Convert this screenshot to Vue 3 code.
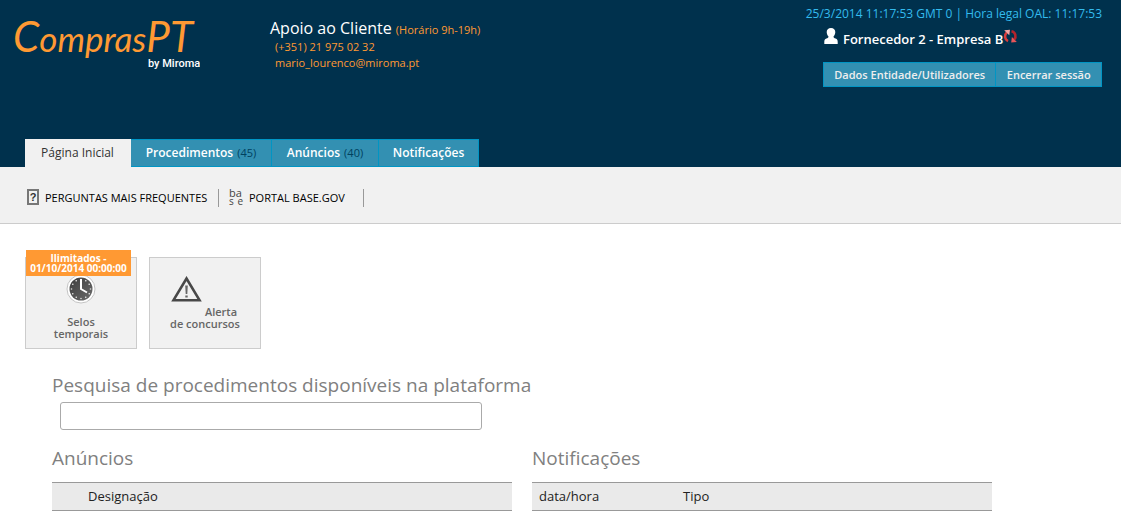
<script setup>
import { ref } from 'vue'

const query = ref('')
const tabs = [
  { label: 'Página Inicial', size: 'home', active: true },
  { label: 'Procedimentos', size: 'procedures', count: 45 },
  { label: 'Anúncios', size: 'notices', count: 40 },
  { label: 'Notificações', size: 'alerts' },
]
const ticks = [0, 30, 60, 90, 120, 150, 180, 210, 240, 270, 300, 330]
</script>

<template>
  <div class="page">
    <header class="header">
      <div class="top">
        <a class="brand" href="#" aria-label="ComprasPT by Miroma">
          <svg class="logo" viewBox="0 0 200 80" aria-hidden="true">
            <text class="wordmark" x="13" y="52"><tspan class="capital">C</tspan>ompras<tspan class="capital">PT</tspan></text>
            <text class="byline" x="148" y="67">by Miroma</text>
          </svg>
        </a>
        <div class="support">
          <p class="support-title">Apoio ao Cliente <span class="hours">(Horário 9h-19h)</span></p>
          <a class="contact" href="tel:+351219750232">(+351) 21 975 02 32</a>
          <a class="contact" href="mailto:mario_lourenco@miroma.pt">mario_lourenco@miroma.pt</a>
        </div>
        <div class="account">
          <p class="clock">25/3/2014 11:17:53 GMT 0 | Hora legal OAL: 11:17:53</p>
          <p class="user">
            <svg class="person" viewBox="0 0 14 17" aria-hidden="true">
              <path fill="#fff" d="M7 0C4.300 0 2.600 1.800 2.700 4.200C2.800 6 3.600 7.500 4.500 8.400C4.500 9.500 3.800 10 2.400 10.600C.8 11.300.3 12.300.3 14V16H13.700V14C13.700 12.300 13.200 11.300 11.600 10.600C10.200 10 9.500 9.500 9.500 8.400C10.400 7.500 11.200 6 11.300 4.200C11.400 1.800 9.700 0 7 0Z" />
            </svg>
            <span class="user-name">Fornecedor 2 - Empresa B</span>
            <button class="refresh" type="button" aria-label="Mudar de entidade">
              <svg viewBox="0 0 15 15" aria-hidden="true">
                <g fill="none" stroke-width="2.600">
                  <path stroke="#d83a3a" d="M5 12.200C1.600 10.500 1 6 3.800 3.400" />
                  <path stroke="#b3242c" d="M8.500 2.200C12.400 3 13.700 7.600 11.200 10.600" />
                </g>
                <path fill="#f3a3a3" d="M1.200 1.200L7 .8L6.300 6.200Z" />
                <path fill="#e8565a" d="M13.800 13L8.200 13.400L8.900 8Z" />
              </svg>
            </button>
          </p>
          <nav class="account-nav" aria-label="Conta">
            <a class="account-link entity" href="#">Dados Entidade/Utilizadores</a>
            <a class="account-link" href="#">Encerrar sessão</a>
          </nav>
        </div>
      </div>
      <nav class="tabs" aria-label="Principal">
        <a v-for="tab in tabs" :key="tab.label" href="#" class="tab" :class="[tab.size, { active: tab.active }]">
          {{ tab.label }}<span v-if="tab.count" class="count">({{ tab.count }})</span>
        </a>
      </nav>
    </header>

    <nav class="subnav" aria-label="Ligações">
      <a class="sublink faq" href="#">
        <span class="faq-icon" aria-hidden="true">?</span>
        PERGUNTAS MAIS FREQUENTES
      </a>
      <a class="sublink base" href="#">
        <span class="base-icon" aria-hidden="true"><span>ba</span><span class="base-lower"><span>s</span><span>e</span></span></span>
        PORTAL BASE.GOV
      </a>
    </nav>

    <main class="main">
      <div class="cards">
        <a class="card" href="#">
          <span class="badge">Ilimitados -<br>01/10/2014 00:00:00</span>
          <svg class="clock-icon" viewBox="0 0 30 30" aria-hidden="true">
            <defs>
              <linearGradient id="clock-face" x1="0" y1="0" x2="1" y2="1">
                <stop offset="0" stop-color="#3c3c3c" />
                <stop offset="1" stop-color="#6c6c6c" />
              </linearGradient>
            </defs>
            <circle cx="15" cy="15" r="14" fill="#fff" stroke="#c4c4c4" />
            <circle cx="15" cy="15" r="11.500" fill="url(#clock-face)" />
            <circle v-for="tick in ticks" :key="tick" cx="15" cy="5.500" r=".8" fill="#ddd" :transform="`rotate(${tick} 15 15)`" />
            <path d="M15 5V15L21 18.500" fill="none" stroke="#fff" stroke-width="2" />
          </svg>
          <span class="card-label">Selos<br>temporais</span>
        </a>
        <a class="card" href="#">
          <svg class="warning-icon" viewBox="0 0 32 26" aria-hidden="true">
            <path fill="none" stroke="#484848" stroke-width="2.600" d="M16.500 2.500L29.500 24.200H3.500Z" />
            <path fill="#666" d="M15.200 9.500H17.800L17.300 18H15.700ZM15.300 19.500H17.700V21.500H15.300Z" />
          </svg>
          <span class="card-label shifted"><span class="first-line">Alerta</span>de concursos</span>
        </a>
      </div>

      <div class="content">
        <label class="title" for="search">Pesquisa de procedimentos disponíveis na plataforma</label>
        <input id="search" v-model="query" class="search" type="text">
        <div class="panels">
          <section class="panel">
            <h2 class="title">Anúncios</h2>
            <table class="table">
              <thead><tr><th class="indented" scope="col">Designação</th></tr></thead>
            </table>
          </section>
          <section class="panel">
            <h2 class="title">Notificações</h2>
            <table class="table">
              <thead><tr><th class="date" scope="col">data/hora</th><th scope="col">Tipo</th></tr></thead>
            </table>
          </section>
        </div>
      </div>
    </main>
  </div>
</template>

<style>
body {
  background: #fff;
}
</style>

<style scoped>
.page {
  font-family: "Trebuchet MS", "Open Sans", "Noto Sans", sans-serif;
  font-size: 12px;
  color: #333;
}
.page * {
  box-sizing: border-box;
}
a {
  color: inherit;
  text-decoration: none;
}
p, h2 {
  margin: 0;
}
.header {
  background: #00314d;
}
.top {
  display: flex;
  align-items: flex-start;
  min-height: 139px;
  padding-right: 19px;
}
.brand {
  width: 270px;
}
.logo {
  display: block;
  width: 200px;
  height: 80px;
}
.wordmark {
  fill: #ff9933;
  font: italic 400 35px Lato, sans-serif;
}
.capital {
  font-size: 42px;
}
.byline {
  fill: #fff;
  font: 500 11px Roboto, sans-serif;
}
.support {
  display: flex;
  flex-direction: column;
  padding-top: 19px;
  color: #ff9933;
}
.support-title {
  font-size: 16px;
  line-height: 18px;
  color: #fff;
}
.hours {
  font-size: 11px;
  color: #ff9933;
}
.contact {
  padding-left: 5px;
  font-size: 11px;
  line-height: 16px;
}
.account {
  margin-left: auto;
  padding-top: 6px;
}
.clock {
  font-size: 12px;
  line-height: 16px;
  text-align: right;
  color: #33bbee;
}
.user {
  display: flex;
  align-items: center;
  height: 24px;
  margin-top: 2px;
}
.person {
  width: 14px;
  height: 17px;
  margin: 0 5px 0 1px;
}
.user-name {
  padding-top: 6px;
  font-size: 13px;
  font-weight: 600;
  line-height: 18px;
  color: #fff;
}
.refresh {
  width: 15px;
  height: 15px;
  padding: 0;
  border: 0;
  background: none;
}
.refresh svg {
  display: block;
  width: 15px;
  height: 15px;
}
.user,
.account-nav {
  width: 279px;
  margin-left: auto;
}
.account-nav {
  display: flex;
  margin-top: 14px;
}
.account-link {
  flex: 1 1 auto;
  border: 1px solid #0095c4;
  border-left: 0;
  background: #3390b2;
  font-size: 11px;
  font-weight: 600;
  line-height: 23px;
  text-align: center;
  color: #eee;
}
.entity {
  border-left: 1px solid #0095c4;
}
.tabs {
  display: flex;
  padding-left: 25px;
}
.tab {
  height: 28px;
  border: 1px solid #0095c4;
  border-left: 0;
  background: #3390b2;
  font-weight: 600;
  line-height: 26px;
  text-align: center;
  color: #fff;
}
.tab.active {
  border-color: #f1f1f1;
  background: #f1f1f1;
  font-weight: 400;
  color: #333;
}
.home {
  width: 106px;
}
.procedures {
  width: 141px;
}
.notices {
  width: 107px;
}
.alerts {
  width: 100px;
}
.count {
  margin-left: 4px;
  font-size: 11px;
  font-weight: 400;
  color: #00415f;
}
.subnav {
  display: flex;
  align-items: center;
  height: 57px;
  padding: 6px 0 0 27px;
  border-bottom: 1px solid #ccc;
  background: #f1f1f1;
}
.sublink {
  display: flex;
  align-items: center;
  height: 18px;
  padding-bottom: 2px;
  border-right: 1px solid #999;
  font-size: 11px;
  color: #000;
}
.faq {
  width: 192px;
  gap: 6px;
}
.base {
  width: 145px;
  padding-left: 10px;
  gap: 6px;
}
.faq-icon {
  width: 12px;
  height: 16px;
  border: 2px solid #777;
  font: 700 11px/12px "Liberation Sans", sans-serif;
  text-align: center;
  color: #333;
}
.base-icon {
  display: flex;
  flex-direction: column;
  width: 14px;
  font: 11px/9px "Open Sans", sans-serif;
  color: #444;
}
.base-lower {
  display: flex;
  justify-content: space-between;
  font-size: 10px;
}
.main {
  padding: 33px 25px 0;
}
.cards {
  display: flex;
  gap: 12px;
}
.card {
  position: relative;
  display: flex;
  flex-direction: column;
  align-items: center;
  width: 112px;
  height: 92px;
  padding-top: 16px;
  border: 1px solid #ccc;
  background: #f1f1f1;
}
.badge {
  position: absolute;
  top: -8px;
  left: 0;
  width: 105px;
  padding: 3px 0;
  background: #ff9933;
  font-size: 10px;
  font-weight: 700;
  line-height: 10px;
  text-align: center;
  white-space: nowrap;
  color: #fff;
}
.clock-icon {
  width: 30px;
  height: 30px;
}
.warning-icon {
  align-self: flex-start;
  width: 32px;
  height: 26px;
  margin: 2px 0 0 20px;
}
.card-label {
  margin-top: 12px;
  font-size: 11px;
  font-weight: 600;
  line-height: 12px;
  text-align: center;
  color: #666;
}
.shifted {
  margin-top: 4px;
}
.first-line {
  display: block;
  padding-left: 32px;
}
.content {
  padding: 24px 0 0 27px;
}
.title {
  display: block;
  font-size: 19px;
  font-weight: 400;
  line-height: 24px;
  color: #808080;
}
.search {
  display: block;
  width: 422px;
  max-width: 100%;
  height: 28px;
  margin: 5px 0 16px 8px;
  border: 1px solid #aaa;
  border-radius: 3px;
  background: #fff;
  font: inherit;
}
.panels {
  display: flex;
  gap: 20px;
}
.panel {
  flex: 1;
  max-width: 460px;
}
.table {
  width: 100%;
  margin-top: 12px;
  border-top: 1px solid #999;
  border-bottom: 1px solid #999;
  border-spacing: 0;
  background: #eaeaea;
}
.table th {
  height: 27px;
  padding: 0 7px 2px;
  font-size: 13px;
  font-weight: 400;
  text-align: left;
  color: #222;
}
.table .indented {
  padding-left: 36px;
}
.table .date {
  width: 144px;
}
</style>
